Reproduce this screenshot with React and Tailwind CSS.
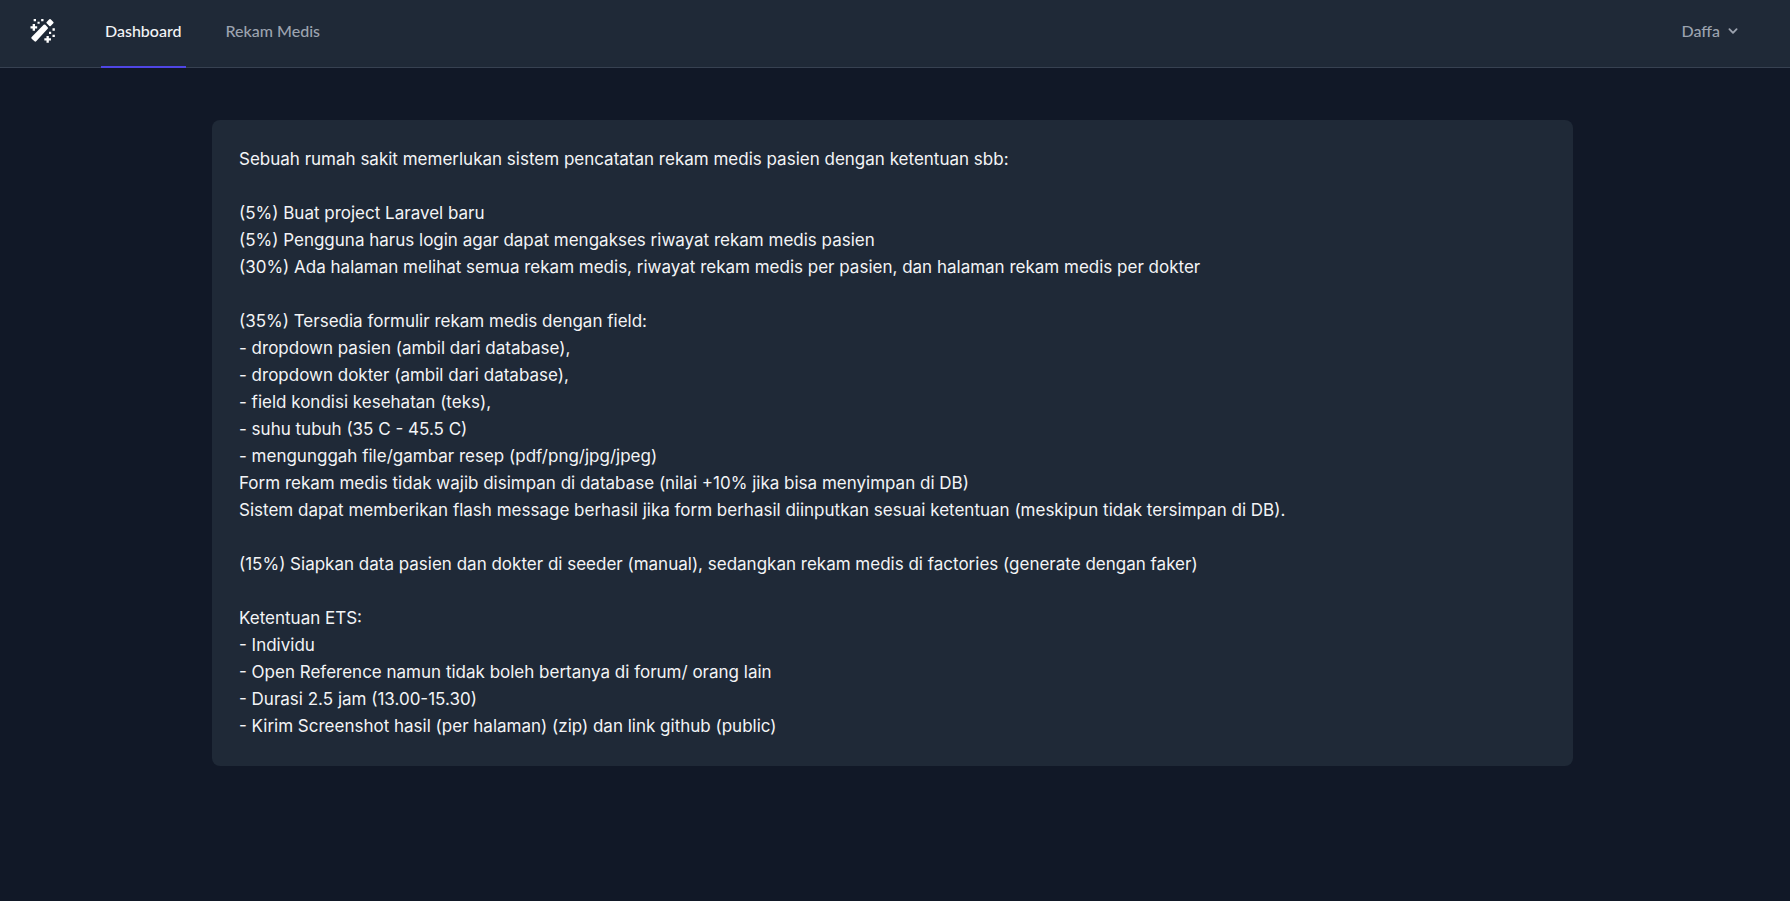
const sections = [
  ["Sebuah rumah sakit memerlukan sistem pencatatan rekam medis pasien dengan ketentuan sbb:"],
  [
    "(5%) Buat project Laravel baru",
    "(5%) Pengguna harus login agar dapat mengakses riwayat rekam medis pasien",
    "(30%) Ada halaman melihat semua rekam medis, riwayat rekam medis per pasien, dan halaman rekam medis per dokter",
  ],
  [
    "(35%) Tersedia formulir rekam medis dengan field:",
    "- dropdown pasien (ambil dari database),",
    "- dropdown dokter (ambil dari database),",
    "- field kondisi kesehatan (teks),",
    "- suhu tubuh (35 C - 45.5 C)",
    "- mengunggah file/gambar resep (pdf/png/jpg/jpeg)",
    "Form rekam medis tidak wajib disimpan di database (nilai +10% jika bisa menyimpan di DB)",
    "Sistem dapat memberikan flash message berhasil jika form berhasil diinputkan sesuai ketentuan (meskipun tidak tersimpan di DB).",
  ],
  [
    "(15%) Siapkan data pasien dan dokter di seeder (manual), sedangkan rekam medis di factories (generate dengan faker)",
  ],
  [
    "Ketentuan ETS:",
    "- Individu",
    "- Open Reference namun tidak boleh bertanya di forum/ orang lain",
    "- Durasi 2.5 jam (13.00-15.30)",
    "- Kirim Screenshot hasil (per halaman) (zip) dan link github (public)",
  ],
];

function WandLogo() {
  return (
    <svg viewBox="0 0 78 78" className="size-[26px] fill-white" aria-hidden="true">
      <path d="M41 20.500Q43.500 18 46 20.500L53 27.500Q55.500 30 53 32.500L18.500 70Q16 72.500 13.500 70L5 62Q2.500 59.500 5 57Z" />
      <path d="M58 4Q60 2 62 4L70 12Q72 14 70 16L62 24Q60 26 58 24L50 16Q48 14 50 12Z" />
      <path d="M8 18h7v6.500h6.500v7H15V38H8v-6.500H1.500v-7H8Z" />
      <path d="M49.500 54h7v6.500H63v7h-6.500V74h-7v-6.500H43v-7h6.500Z" />
      <path d="M11 3h7v7h-7ZM22.500 11h6.500v6.500h-6.500ZM33.500 3h7v7h-7ZM67.500 31h7v7h-7ZM57 41.500h6.500V48H57ZM67.500 50h7v7h-7Z" />
    </svg>
  );
}

function ChevronDown() {
  return (
    <svg viewBox="0 0 20 20" className="size-[18px] fill-current" aria-hidden="true">
      <path
        fillRule="evenodd"
        clipRule="evenodd"
        d="M5.293 7.293a1 1 0 011.414 0L10 10.586l3.293-3.293a1 1 0 111.414 1.414l-4 4a1 1 0 01-1.414 0l-4-4a1 1 0 010-1.414z"
      />
    </svg>
  );
}

export default function App() {
  return (
    <div className="min-h-screen bg-[#111827]">
      <nav className="flex h-17 justify-between border-b border-[#374151] bg-[#1f2937] pr-12 pl-[30px] font-['Lato',sans-serif] text-[16px] font-medium">
        <div className="flex">
          <a href="#" aria-label="Beranda" className="flex items-center pb-[6px]">
            <WandLogo />
          </a>
          <div className="-mb-px ml-[45px] flex gap-9">
            <a
              href="#"
              aria-current="page"
              className="flex items-center border-b-2 border-[#4f46e5] px-1 pb-[4px] text-[#f3f4f6]"
            >
              Dashboard
            </a>
            <a href="#" className="flex items-center border-b-2 border-transparent px-1 pb-[4px] text-[#9ca3af]">
              Rekam Medis
            </a>
          </div>
        </div>
        <button type="button" className="flex items-center gap-1 pb-[6px] text-[#9ca3af]">
          Daffa
          <ChevronDown />
        </button>
      </nav>
      <main className="pt-[52px] pr-[41px] pl-9 font-['Inter',sans-serif]">
        <div className="mx-auto flex max-w-[1361px] flex-col gap-[27px] rounded-lg bg-[#1f2937] px-[27px] py-[26px] text-[17px] leading-[27px] text-[#f3f4f6]">
          {sections.map((lines) => (
            <div key={lines[0]}>
              {lines.map((line) => (
                <p key={line}>{line}</p>
              ))}
            </div>
          ))}
        </div>
      </main>
    </div>
  );
}
